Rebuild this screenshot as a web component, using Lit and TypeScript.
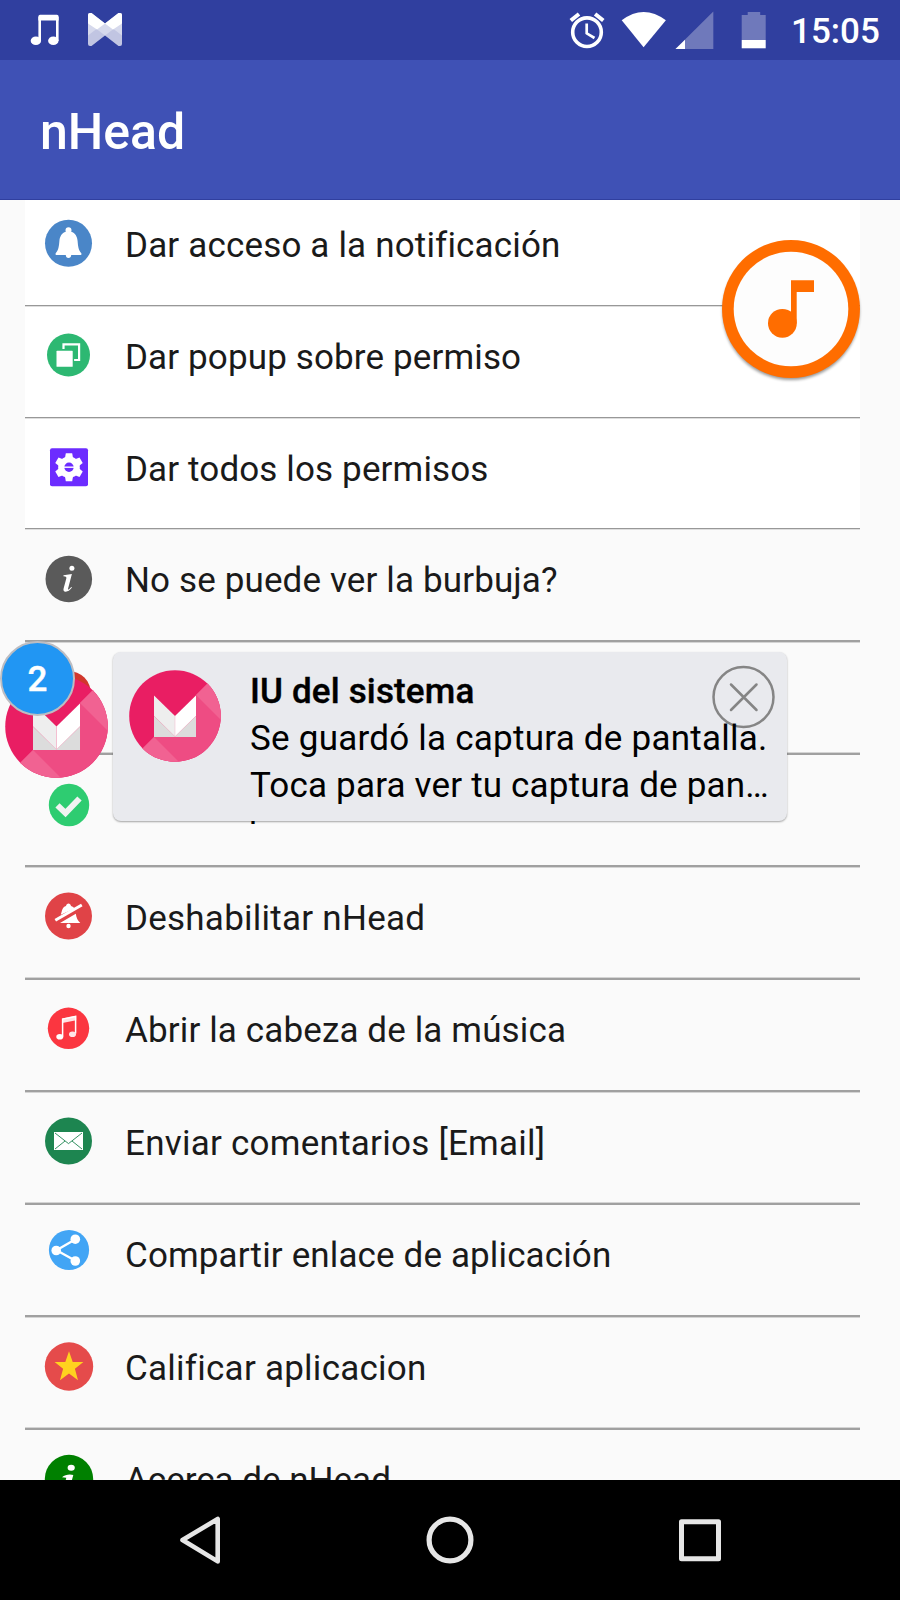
import { LitElement, html, css, svg } from "lit";
import { customElement } from "lit/decorators.js";

const bell = svg`
  <circle cx="68.5" cy="243.3" r="23.5" fill="#4a86c8"/>
  <path fill="#fff" d="M68.5 227.2c1.9 0 3 1.300 3 3c0 .6-.1 1-.3 1.600c4 1.200 6 4.700 6.400 9.200c.4 5 .9 9.500 3.700 12.200c.5 .9 .1 1.900-1.100 1.900H71.200c0 1.900-1.100 3-2.700 3s-2.700-1.100-2.700-3H56.800c-1.200 0-1.600-1-1.100-1.900c2.800-2.700 3.300-7.200 3.700-12.200c.4-4.500 2.400-8 6.400-9.200c-.2-.6-.3-1-.3-1.600c0-1.700 1.100-3 3-3z"/>`;

const popup = svg`
  <circle cx="68.5" cy="355" r="21.5" fill="#2db872"/>
  <path fill="none" stroke="#fff" stroke-width="2.200" d="M63.500 349v-4.600h15.600v15.600h-5"/>
  <rect x="56.500" y="350.800" width="16.200" height="16" rx=".6" fill="#fff"/>`;

const gear = svg`
  <rect x="50" y="448.200" width="38" height="38" rx="2" fill="#6c2cff"/>
  <g fill="#fff">
    <circle cx="69" cy="467.200" r="10.800"/>
    ${[0, 60, 120, 180, 240, 300].map(
      (a) => svg`<path transform="rotate(${a} 69 467.2)" d="M65 458l.8-4.800h6.400l.8 4.800z"/>`
    )}
  </g>
  <circle cx="69" cy="467.200" r="4.700" fill="#6c2cff"/>
  <path stroke="#fff" stroke-width="1.400" d="M64 467.200h10"/>`;

const infoGray = svg`
  <circle cx="68.800" cy="579" r="23.300" fill="#5a5a5a"/>
  <circle cx="71.900" cy="568.300" r="2.500" fill="#fff"/>
  <path fill="#fff" d="M63.500 575.200l8.400-1.200l-3.800 14.500c-.3 1.300 .4 1.400 1.200 .6l2-2l.7 .5c-2.300 3-4.300 4.200-6.400 4.100c-1.900-.1-2.500-1.300-2-3.300l2.700-9.800c.4-1.500 0-2.300-2.900-2.400z"/>`;

const redDot = svg`<circle cx="68.500" cy="693.500" r="22.500" fill="#d1372c"/>`;

const check = svg`
  <ellipse cx="69" cy="805" rx="20.200" ry="21.300" fill="#2ecc71"/>
  <path fill="none" stroke="#f1f3f2" stroke-width="6" d="M57.500 805.300l8 7.800l14-14.600"/>`;

const bellOff = svg`
  <circle cx="68.500" cy="916" r="23.500" fill="#e04347"/>
  <path fill="#fff" d="M60.800 914.800c1.500-4.500 1.200-7.200 5.200-8.700c.4-3.400 4.600-3.400 5 0c1.600 .6 2.800 1.300 3.600 2.400zM75.800 913.700c.6 4.200 1.800 6.600 4.500 9.300H60z"/>
  <circle cx="68.500" cy="926" r="2.200" fill="#fff"/>
  <path stroke="#fff" stroke-width="3" d="M55.300 920.300L81.800 905"/>`;

const music = svg`
  <circle cx="68.500" cy="1028.300" r="20.700" fill="#fb3640"/>
  <path fill="#fff" d="M62.300 1018.500l13.900-2.700v4.500l-13.900 2.700z" opacity=".85"/>
  <path fill="none" stroke="#fff" stroke-width="1.500" d="M62.600 1036.500v-17.500l13-2.500v17"/>
  <ellipse cx="59.800" cy="1036.800" rx="3.500" ry="2.800" fill="#fff"/>
  <ellipse cx="72.500" cy="1034.300" rx="3.500" ry="2.800" fill="#ffe4e6"/>`;

const mail = svg`
  <circle cx="68.500" cy="1141" r="23.500" fill="#1d8550"/>
  <rect x="54" y="1132" width="29" height="18" fill="#fff"/>
  <path fill="none" stroke="#1d8550" stroke-width=".9" d="M55 1133l13.500 10.600l13.500-10.600M55 1149l10-8M82 1149l-10-8"/>`;

const share = svg`
  <circle cx="69" cy="1250" r="20.100" fill="#42a5f5"/>
  <path fill="none" stroke="#fff" stroke-width="2.300" d="M75.500 1239.300l-19 11l19 10.500"/>
  <g fill="#fff"><circle cx="75.300" cy="1239.200" r="4.800"/><circle cx="56.200" cy="1250.500" r="4.800"/><circle cx="75.300" cy="1261" r="4.800"/></g>`;

const star = svg`
  <circle cx="69" cy="1366.500" r="24.200" fill="#e54b4b"/>
  <path fill="#ffd21f" d="M69 1351.300l3.700 10.600l10.700 .1l-8.500 6.800l3.100 11.500l-9-6.900l-9 6.900l3.100-11.500l-8.500-6.800l10.700-.1z"/>`;

const infoGreen = svg`
  <circle cx="69" cy="1479" r="24.200" fill="#008000"/>
  <ellipse cx="71.200" cy="1467.800" rx="3.600" ry="3" fill="#fff"/>
  <path fill="#fff" d="M62 1477.200c3-2.700 8-3.400 11.300-2.200l-4 15h-6l3-12.200z"/>`;

interface Item {
  label: string;
  icon: unknown;
  top: number;
  cls: string;
}

const items: Item[] = [
  { label: "Dar acceso a la notificación", icon: bell, top: 210, cls: "white first thin" },
  { label: "Dar popup sobre permiso", icon: popup, top: 327, cls: "white thin h112" },
  { label: "Dar todos los permisos", icon: gear, top: 439, cls: "white thin h111" },
  { label: "No se puede ver la burbuja?", icon: infoGray, top: 550, cls: "trail h113" },
  { label: "", icon: redDot, top: 663, cls: "lead h112" },
  { label: "p", icon: check, top: 775, cls: "trail h113 tucked" },
  { label: "Deshabilitar nHead", icon: bellOff, top: 888, cls: "lead h112 wide" },
  { label: "Abrir la cabeza de la música", icon: music, top: 1000, cls: "trail h113" },
  { label: "Enviar comentarios [Email]", icon: mail, top: 1113, cls: "lead h112 wide" },
  { label: "Compartir enlace de aplicación", icon: share, top: 1225, cls: "trail h113" },
  { label: "Calificar aplicacion", icon: star, top: 1338, cls: "lead h112 wide" },
  { label: "Acerca de nHead", icon: infoGreen, top: 1450, cls: "trail h113 narrow" },
];

const marshmallow = (size: number) => html`
  <svg width=${size} height=${size} viewBox="0 0 92 92">
    <clipPath id="disc"><circle cx="46" cy="46" r="45.800"/></clipPath>
    <g clip-path="url(#disc)">
      <rect width="92" height="92" fill="#e91e63"/>
      <path fill="#ee4c83" d="M92 0L0 92h92z"/>
      <path fill="#f16292" d="M67 25L92 0V50z"/>
      <path fill="#f16292" d="M25 67L0 92H50z"/>
      <path fill="#e91e63" d="M25 25h42L46 46z"/>
    </g>
    <path fill="#eee" d="M25 25.500l21 20.500v21L25 46z"/>
    <path fill="#fff" d="M67 25.500L46 46v21l21-21z"/>
    <path fill="#dcdcdc" d="M25 46v21h42V46L46 66.500z"/>
    <path fill="none" stroke="#f3b4c9" stroke-width=".5" d="M25 46l21 20.500l21-20.500M46 46v20.500"/>
  </svg>`;

@customElement("app-root")
export class AppRoot extends LitElement {
  static styles = css`
    :host {
      display: flex;
      flex-direction: column;
      position: relative;
      width: 900px;
      height: 1600px;
      overflow: hidden;
      background: #fafafa;
      font-family: Roboto, "Noto Sans", sans-serif;
      font-size: 35px;
      line-height: 41px;
      color: #1a1a1a;
    }
    svg { display: block; flex: none; }
    .status {
      height: 60px;
      flex: none;
      display: flex;
      justify-content: space-between;
      background: #303f9f;
      color: #fff;
      font-weight: 500;
    }
    .right { display: flex; }
    .clock { width: 109px; padding-top: 11px; }
    .bar {
      height: 140px;
      flex: none;
      box-sizing: border-box;
      padding: 43px 0 0 40px;
      background: #3f51b5;
      border-bottom: 1px solid #303f9f;
      color: #fff;
      font-size: 50px;
      line-height: 58px;
      font-weight: 500;
    }
    .list {
      flex: 1;
      min-height: 0;
      overflow: hidden;
      padding: 0 40px 0 25px;
    }
    .row {
      display: flex;
      box-sizing: border-box;
      gap: 28px;
      padding: 20px 0 0 16px;
    }
    .row.first { height: 107px; padding-top: 10px; }
    .first .label { margin-top: 15px; letter-spacing: 0.170px; }
    .h111 { height: 111px; }
    .h112 { height: 112px; }
    .h113 { height: 113px; }
    .white { background-color: #fff; }
    .thin { background-image: linear-gradient(#989898 50%, #dedede 50%); background-size: 100% 2px; background-repeat: no-repeat; background-position: bottom; }
    .trail, .lead { background-repeat: no-repeat; background-position: bottom; background-size: 100% 3px; }
    .trail { background-image: linear-gradient(#a0a0a0 66.600%, #d4d4d4 66.600%); }
    .lead { background-image: linear-gradient(#d4d4d4 33.300%, #a0a0a0 33.300%); }
    .label { margin-top: 10px; white-space: nowrap; letter-spacing: 0.130px; }
    .wide .label { letter-spacing: 0.250px; }
    .narrow .label { letter-spacing: 0; }
    .tucked .label { padding-left: 124px; color: #000; }
    .nav {
      height: 120px;
      flex: none;
      display: flex;
      background: #000;
    }
    .fab { position: absolute; left: 716px; top: 234px; }
    .card {
      position: absolute;
      left: 113px;
      top: 652px;
      width: 674px;
      height: 169px;
      box-sizing: border-box;
      display: flex;
      gap: 29px;
      padding: 18px 0 0 16px;
      border-radius: 8px;
      background: #e9eaee;
      box-shadow: 0 1px 2px rgba(0, 0, 0, 0.35);
      color: #000;
    }
    .close { position: absolute; left: 598px; top: 13px; }
    .text { position: relative; display: flex; flex-direction: column; line-height: 47px; white-space: nowrap; margin-top: -2px; letter-spacing: 0.240px; }
    .title { font-weight: 500; letter-spacing: 0.150px; -webkit-text-stroke: 0.4px #000; }
    .last { letter-spacing: 0.180px; }
    .head { position: absolute; left: 4.500px; top: 675px; }
    .badge {
      position: absolute;
      left: 0;
      top: 641px;
      width: 75px;
      height: 75px;
      box-sizing: border-box;
      padding-top: 2px;
      border: 2px solid #bdbdc2;
      border-radius: 50%;
      background: #2196f3;
      color: #fff;
      font-weight: 500;
      -webkit-text-stroke: 0.4px #fff;
      display: flex;
      align-items: center;
      justify-content: center;
    }
  `;

  render() {
    return html`
      <header class="status">
        <svg width="140" height="60" viewBox="0 0 140 60">
          <path fill="none" stroke="#fff" stroke-width="2.600" d="M39.700 41V17M57.300 41V17"/>
          <path fill="#fff" d="M38.400 20.500v-4q0-1.700 1.700-1.700h16.800q1.700 0 1.700 1.700v4z"/>
          <ellipse cx="35.900" cy="40.700" rx="5.200" ry="4.300" fill="#fff"/>
          <ellipse cx="53.300" cy="40.700" rx="5.200" ry="4.300" fill="#fff"/>
          <path fill="#c1c5e2" d="M88 15q0-2 2-2h1.500L105 23.500L118.500 13h1.500q2 0 2 2v29q0 2-2 2h-1.500L105 35.500L91.500 46H90q-2 0-2-2z"/>
          <path fill="#d6d9ec" d="M88 24l17-.5l17 .5v11.500l-8.500-6.500l-8.500 6.500l-8.500-6.500l-8.500 6.500z"/>
          <path fill="#fff" d="M88 15q0-2 2-2h1.500L105 23.500L97 29.500L88 23.500zM122 15q0-2-2-2h-1.500L105 23.500L113 29.500L122 23.500z"/>
        </svg>
        <div class="right">
          <svg width="231" height="60" viewBox="560 0 231 60">
            <g fill="none" stroke="#fff">
              <circle cx="587" cy="32.200" r="14.300" stroke-width="3.600"/>
              <path stroke-width="2.700" d="M586.700 23.500v9.800l7.800 4.700"/>
              <path stroke-width="4" d="M570.800 20.500l8.200-6.500M603.300 20.500l-8.200-6.500"/>
            </g>
            <path fill="#fff" d="M621.700 20.200q21.900-16.600 44.200 0L643.600 47.200z"/>
            <path fill="#6f79bb" d="M713.300 11.500V49H675.500z"/>
            <path fill="#fff" d="M685 39.700V49h-9.500z"/>
            <path fill="#6f79bb" d="M741.700 15h6v-3h12.500v3h5.500v25h-24z"/>
            <path fill="#fff" d="M741.700 40h24v8.300h-24z"/>
          </svg>
          <div class="clock">15:05</div>
        </div>
      </header>
      <div class="bar">nHead</div>
      <main class="list">
        ${items.map(
          (i) => html`<div class="row ${i.cls}">
            <svg width="56" height="66" viewBox="41 ${i.top} 56 66">${i.icon}</svg>
            <div class="label">${i.label}</div>
          </div>`
        )}
      </main>
      <nav class="nav">
        <svg width="900" height="120" viewBox="0 1480 900 120" fill="none" stroke="#e6e6e6" stroke-linejoin="round">
          <path stroke-width="4.600" d="M217.700 1519v42.400L182.500 1540z"/>
          <circle cx="450" cy="1540" r="20.900" stroke-width="5.200"/>
          <rect x="681.500" y="1521.800" width="37" height="37" stroke-width="5"/>
        </svg>
      </nav>

      <svg class="fab" width="150" height="152" viewBox="716 234 150 152">
        <defs><filter id="s" x="-10%" y="-10%" width="120%" height="125%"><feGaussianBlur stdDeviation="1.800"/></filter></defs>
        <circle cx="791" cy="311.500" r="68.500" fill="#000" opacity=".4" filter="url(#s)"/>
        <circle cx="791" cy="309" r="69" fill="#ff6d00"/>
        <circle cx="791" cy="309" r="57.300" fill="#fdfdfd"/>
        <path fill="#ff6d00" d="M791 280.300h23v11.700h-17.300v31.300h-5.700z"/>
        <circle cx="782.400" cy="323.300" r="14.400" fill="#ff6d00"/>
      </svg>

      <section class="card">
        ${marshmallow(92)}
        <svg class="close" width="64" height="64" viewBox="0 0 64 64" fill="none" stroke="#858585" stroke-width="2.500" stroke-linecap="round">
          <circle cx="32.500" cy="32" r="30"/>
          <path d="M20 19.500l25.500 25.500M45.500 19.500L20 45"/>
        </svg>
        <div class="text">
          <span class="title">IU del sistema</span>
          <span>Se guardó la captura de pantalla.</span>
          <span class="last">Toca para ver tu captura de pan…</span>
        </div>
      </section>
      <div class="head">${marshmallow(103)}</div>
      <div class="badge">2</div>
    `;
  }
}
